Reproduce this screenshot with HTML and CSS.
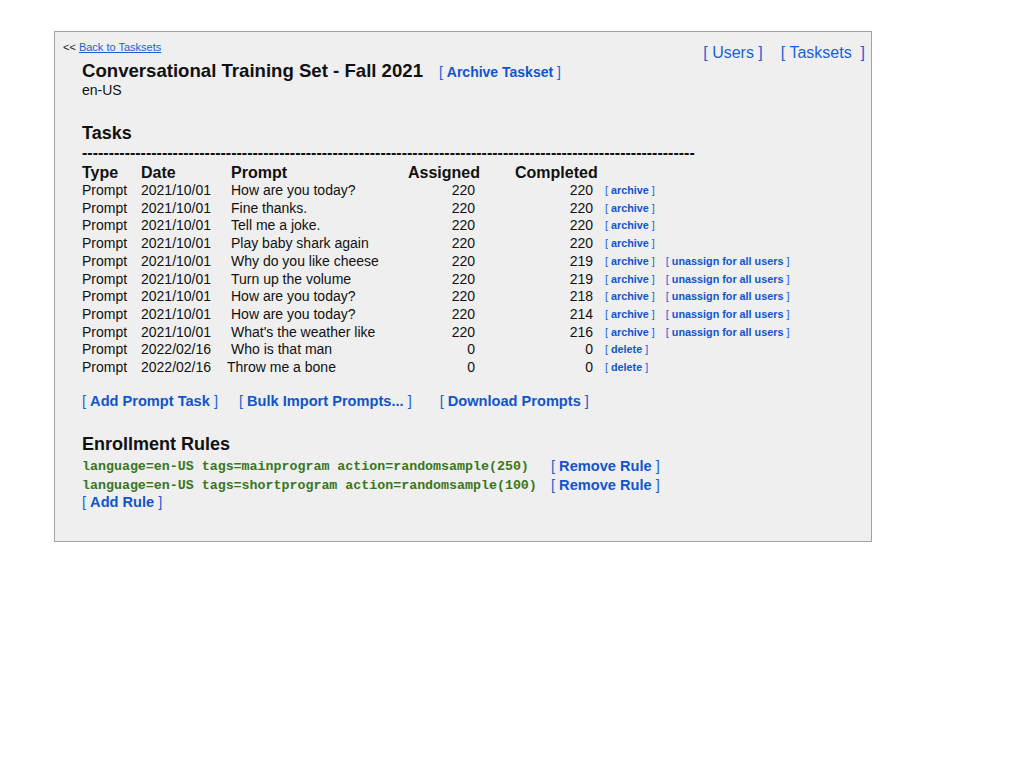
FILE: index.html
```html
<!DOCTYPE html>
<html>
<head>
<meta charset="utf-8">
<link rel="stylesheet" href="styles.css">
</head>
<body>
<div class="panel">
  <div class="top">
    <div class="back">&lt;&lt; <a href="#">Back to Tasksets</a></div>
    <div class="nav"><span class="navlink">[ Users ]</span><span class="navlink">[ Tasksets &nbsp;]</span></div>
  </div>
  <div class="content">
    <div class="title-row">
      <h1 class="title">Conversational Training Set - Fall 2021</h1>
      <span class="lnk lnk-md">[ <b>Archive Taskset</b> ]</span>
    </div>
    <div class="locale">en-US</div>

    <h2 class="section">Tasks</h2>
    <div class="dashes">-------------------------------------------------------------------------------------------------------------------</div>

    <div class="table">
      <div class="row head">
        <span class="c-type">Type</span><span class="c-date">Date</span><span class="c-prompt">Prompt</span><span class="c-asg">Assigned</span><span class="c-cmp">Completed</span><span class="c-act"></span>
      </div>
      <div class="row"><span class="c-type">Prompt</span><span class="c-date">2021/10/01</span><span class="c-prompt">How are you today?</span><span class="c-asg num">220</span><span class="c-cmp num">220</span><span class="c-act"><span class="lnk lnk-sm">[ <b>archive</b> ]</span></span></div>
      <div class="row"><span class="c-type">Prompt</span><span class="c-date">2021/10/01</span><span class="c-prompt">Fine thanks.</span><span class="c-asg num">220</span><span class="c-cmp num">220</span><span class="c-act"><span class="lnk lnk-sm">[ <b>archive</b> ]</span></span></div>
      <div class="row"><span class="c-type">Prompt</span><span class="c-date">2021/10/01</span><span class="c-prompt">Tell me a joke.</span><span class="c-asg num">220</span><span class="c-cmp num">220</span><span class="c-act"><span class="lnk lnk-sm">[ <b>archive</b> ]</span></span></div>
      <div class="row"><span class="c-type">Prompt</span><span class="c-date">2021/10/01</span><span class="c-prompt">Play baby shark again</span><span class="c-asg num">220</span><span class="c-cmp num">220</span><span class="c-act"><span class="lnk lnk-sm">[ <b>archive</b> ]</span></span></div>
      <div class="row"><span class="c-type">Prompt</span><span class="c-date">2021/10/01</span><span class="c-prompt">Why do you like cheese</span><span class="c-asg num">220</span><span class="c-cmp num">219</span><span class="c-act"><span class="lnk lnk-sm">[ <b>archive</b> ]</span><span class="lnk lnk-sm">[ <b>unassign for all users</b> ]</span></span></div>
      <div class="row"><span class="c-type">Prompt</span><span class="c-date">2021/10/01</span><span class="c-prompt">Turn up the volume</span><span class="c-asg num">220</span><span class="c-cmp num">219</span><span class="c-act"><span class="lnk lnk-sm">[ <b>archive</b> ]</span><span class="lnk lnk-sm">[ <b>unassign for all users</b> ]</span></span></div>
      <div class="row"><span class="c-type">Prompt</span><span class="c-date">2021/10/01</span><span class="c-prompt">How are you today?</span><span class="c-asg num">220</span><span class="c-cmp num">218</span><span class="c-act"><span class="lnk lnk-sm">[ <b>archive</b> ]</span><span class="lnk lnk-sm">[ <b>unassign for all users</b> ]</span></span></div>
      <div class="row"><span class="c-type">Prompt</span><span class="c-date">2021/10/01</span><span class="c-prompt">How are you today?</span><span class="c-asg num">220</span><span class="c-cmp num">214</span><span class="c-act"><span class="lnk lnk-sm">[ <b>archive</b> ]</span><span class="lnk lnk-sm">[ <b>unassign for all users</b> ]</span></span></div>
      <div class="row"><span class="c-type">Prompt</span><span class="c-date">2021/10/01</span><span class="c-prompt">What's the weather like</span><span class="c-asg num">220</span><span class="c-cmp num">216</span><span class="c-act"><span class="lnk lnk-sm">[ <b>archive</b> ]</span><span class="lnk lnk-sm">[ <b>unassign for all users</b> ]</span></span></div>
      <div class="row"><span class="c-type">Prompt</span><span class="c-date">2022/02/16</span><span class="c-prompt">Who is that man</span><span class="c-asg num">0</span><span class="c-cmp num">0</span><span class="c-act"><span class="lnk lnk-sm">[ <b>delete</b> ]</span></span></div>
      <div class="row"><span class="c-type">Prompt</span><span class="c-date">2022/02/16</span><span class="c-prompt shift">Throw me a bone</span><span class="c-asg num">0</span><span class="c-cmp num">0</span><span class="c-act"><span class="lnk lnk-sm">[ <b>delete</b> ]</span></span></div>
    </div>

    <div class="actions">
      <span class="lnk lnk-lg">[ <b>Add Prompt Task</b> ]</span>
      <span class="lnk lnk-lg">[ <b>Bulk Import Prompts...</b> ]</span>
      <span class="lnk lnk-lg">[ <b>Download Prompts</b> ]</span>
    </div>

    <h2 class="section enroll">Enrollment Rules</h2>
    <div class="rules">
      <div class="rule"><code class="code">language=en-US tags=mainprogram action=randomsample(250)</code><span class="lnk lnk-lg">[ <b>Remove Rule</b> ]</span></div>
      <div class="rule"><code class="code">language=en-US tags=shortprogram action=randomsample(100)</code><span class="lnk lnk-lg">[ <b>Remove Rule</b> ]</span></div>
    </div>
    <div class="add-rule"><span class="lnk lnk-lg">[ <b>Add Rule</b> ]</span></div>
  </div>
</div>
</body>
</html>
```
FILE: styles.css
```css
html, body {
  margin: 0;
  padding: 0;
  background: #ffffff;
}
body {
  font-family: "Liberation Sans", Arial, sans-serif;
  color: #111111;
}
.panel {
  margin: 31px 0 0 54px;
  width: 816px;
  height: 509px;
  border: 1px solid #a3a3a3;
  background: #efefef;
  box-sizing: content-box;
}
.top {
  display: flex;
  justify-content: space-between;
  align-items: flex-start;
  padding: 8px 6px 0 8px;
  height: 22px;
}
.back {
  font-size: 11px;
  line-height: 14px;
  color: #222;
}
.back a {
  color: #1a5fd6;
  text-decoration: underline;
}
.nav {
  display: flex;
  gap: 18px;
  margin-top: 4px;
}
.navlink {
  font-size: 16px;
  line-height: 18px;
  color: #1a5fd6;
}
.content {
  padding-left: 27px;
}
.title-row {
  display: flex;
  align-items: baseline;
  gap: 16px;
  margin-top: -2px;
}
.title {
  margin: 0;
  font-size: 18.6px;
  line-height: 22px;
  font-weight: bold;
}
.lnk {
  color: #1a5fd6;
  white-space: pre;
}
.lnk b {
  color: #1155cc;
}
.lnk-md {
  font-size: 14px;
}
.lnk-sm {
  font-size: 10.8px;
}
.lnk-lg {
  font-size: 14.6px;
}
.locale {
  font-size: 14px;
  line-height: 16px;
}
.section {
  margin: 24px 0 0 0;
  font-size: 18px;
  line-height: 22px;
  font-weight: bold;
}
.dashes {
  white-space: nowrap;
  font-size: 16px;
  font-weight: bold;
  line-height: 12px;
  height: 12px;
  margin-top: 3px;
}
.table {
  margin-top: 5px;
}
.row {
  display: grid;
  grid-template-columns: 59px 90px 177px 107px 90px auto;
  font-size: 14px;
  line-height: 17.7px;
  white-space: nowrap;
}
.row.head {
  font-size: 16px;
  font-weight: bold;
  line-height: 18px;
}
.row .num {
  text-align: right;
}
.c-asg.num {
  padding-right: 40px;
}
.c-cmp.num {
  padding-right: 12px;
}
.c-act {
  display: flex;
  gap: 11px;
}
.shift {
  margin-left: -4px;
}
.actions {
  display: flex;
  gap: 21px;
  margin-top: 15px;
  line-height: 18px;
}
.actions .lnk:nth-child(3) {
  margin-left: 7px;
}
.section.enroll {
  margin-top: 23px;
}
.rules {
  margin-top: 2px;
}
.rule {
  display: grid;
  grid-template-columns: 469px auto;
  align-items: center;
  height: 19px;
  line-height: 19px;
}
.rule + .rule {
  height: 17px;
  line-height: 17px;
}
.code {
  font-family: "Liberation Mono", "Courier New", monospace;
  font-size: 13.3px;
  font-weight: bold;
  color: #38761d;
  line-height: 19px;
}
.add-rule {
  line-height: 17px;
}
```
